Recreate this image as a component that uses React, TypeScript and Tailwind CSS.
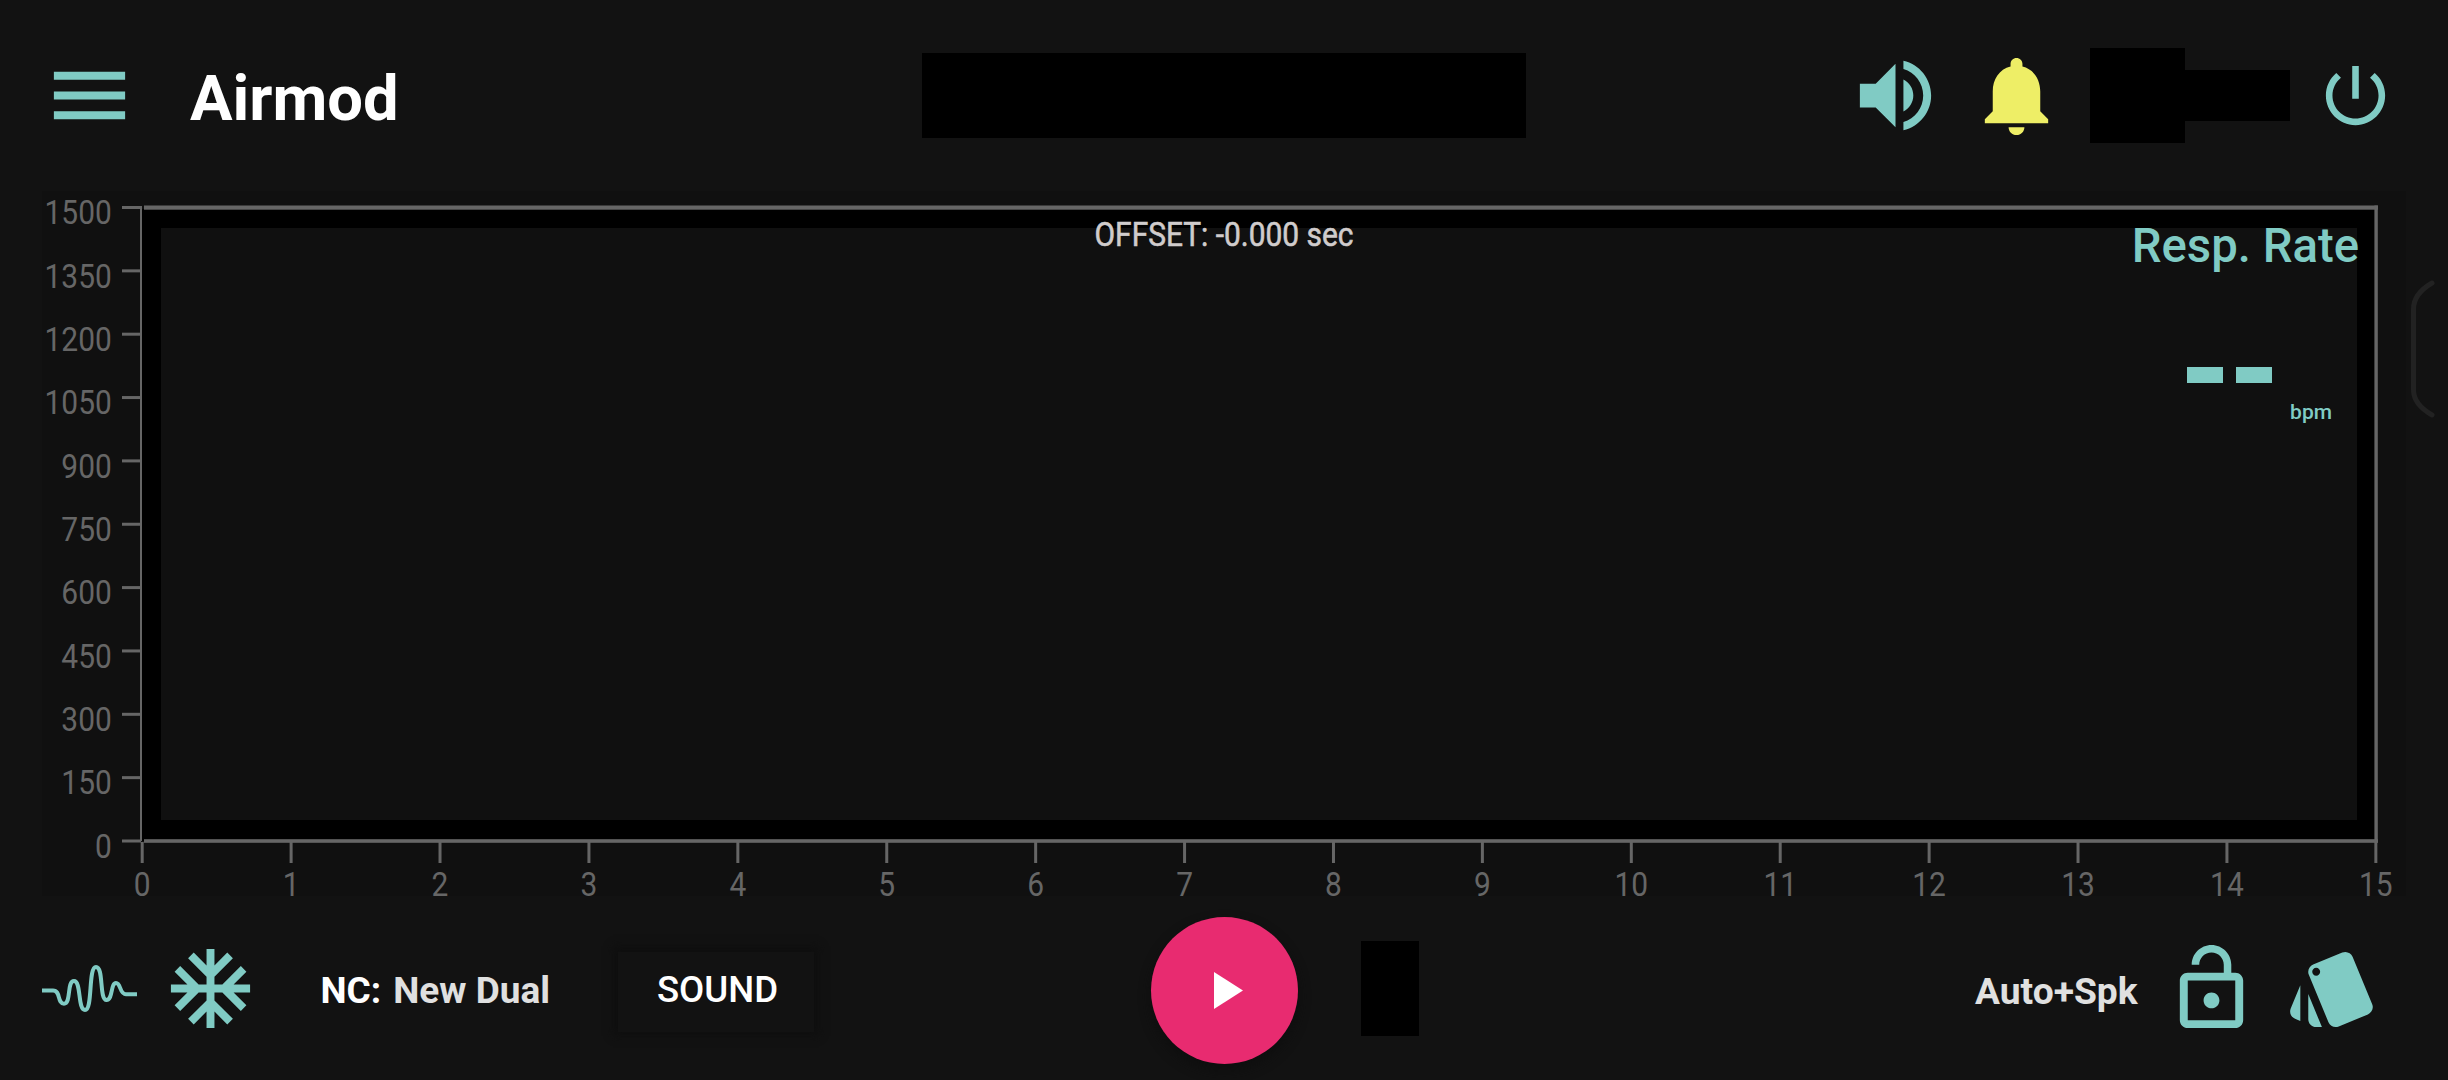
import type { ReactNode } from "react";

const TEAL = "#80cbc4";

const PATHS = {
  menu: "M3 18h18v-2H3v2zm0-5h18v-2H3v2zm0-7v2h18V6H3z",
  volume:
    "M3 9v6h4l5 5V4L7 9H3zm13.5 3c0-1.77-1.02-3.29-2.5-4.03v8.05c1.48-.73 2.5-2.25 2.5-4.02zM14 3.23v2.06c2.89.86 5 3.54 5 6.71s-2.11 5.85-5 6.71v2.06c4.01-.91 7-4.49 7-8.77s-2.99-7.86-7-8.77z",
  bell: "M12 22c1.1 0 2-.9 2-2h-4c0 1.1.89 2 2 2zm6-6v-5c0-3.07-1.64-5.64-4.5-6.32V4c0-.83-.67-1.5-1.5-1.5s-1.5.67-1.5 1.5v.68C7.63 5.36 6 7.92 6 11v5l-2 2v1h16v-1l-2-2z",
  power:
    "M13 3h-2v10h2V3zm4.83 2.17l-1.42 1.42C17.99 7.86 19 9.81 19 12c0 3.87-3.13 7-7 7s-7-3.13-7-7c0-2.19 1.01-4.14 2.58-5.42L6.17 5.17C4.23 6.82 3 9.26 3 12c0 4.97 4.03 9 9 9s9-4.03 9-9c0-2.74-1.23-5.18-3.17-6.83z",
  freeze:
    "M22 11h-4.17l3.24-3.24-1.41-1.42L15 11h-2V9l4.66-4.66-1.42-1.41L13 6.17V2h-2v4.17L7.76 2.93 6.34 4.34 11 9v2H9L4.34 6.34 2.93 7.76 6.17 11H2v2h4.17l-3.24 3.24 1.41 1.42L9 13h2v2l-4.66 4.66 1.42 1.41L11 17.83V22h2v-4.17l3.24 3.24 1.42-1.41L13 15v-2h2l4.66 4.66 1.41-1.42L17.83 13H22v-2z",
  unlock:
    "M12 17c1.1 0 2-.9 2-2s-.9-2-2-2-2 .9-2 2 .9 2 2 2zm6-9h-1V6c0-2.76-2.24-5-5-5S7 3.24 7 6h1.9c0-1.71 1.39-3.1 3.1-3.1 1.71 0 3.1 1.39 3.1 3.1v2H6c-1.1 0-2 .9-2 2v10c0 1.1.9 2 2 2h12c1.1 0 2-.9 2-2V10c0-1.1-.9-2-2-2zm0 12H6V10h12v10z",
  cards:
    "M2.53 19.65l1.34.56v-9.03l-2.43 5.86c-.41 1.02.08 2.19 1.09 2.61zm19.5-3.7L17.07 3.98c-.31-.75-1.04-1.21-1.81-1.23-.26 0-.53.04-.79.15L7.1 5.95c-.75.31-1.21 1.03-1.23 1.8-.01.27.04.54.15.8l4.96 11.97c.31.76 1.05 1.22 1.83 1.23.26 0 .52-.05.77-.15l7.36-3.05c1.02-.42 1.51-1.59 1.09-2.6zM7.88 8.75c-.55 0-1-.45-1-1s.45-1 1-1 1 .45 1 1-.45 1-1 1zm-2 11c0 1.1.9 2 2 2h1.45l-3.45-8.34v6.34z",
};

function Icon({ d, className = "" }: { d: string; className?: string }) {
  return (
    <svg viewBox="0 0 24 24" fill="currentColor" className={`block shrink-0 ${className}`}>
      <path d={d} />
    </svg>
  );
}

function IconButton({ label, className = "", children }: { label: string; className?: string; children: ReactNode }) {
  return (
    <button aria-label={label} className={`block shrink-0 text-[#80cbc4] ${className}`}>
      {children}
    </button>
  );
}

function Header() {
  return (
    <header className="flex h-[191px] items-center pl-[42px]">
      <IconButton label="Menu">
        <Icon d={PATHS.menu} className="size-[95px]" />
      </IconButton>
      <h1 className="ml-[53px] w-[732px] shrink-0 pt-[5px] text-[63.3px] leading-[71px] font-bold text-white">Airmod</h1>
      <div className="h-[85px] w-[604px] shrink-0 bg-black" />
      <IconButton label="Volume" className="ml-[322px]">
        <Icon d={PATHS.volume} className="size-[95px]" />
      </IconButton>
      <IconButton label="Alarms" className="ml-[26px]">
        <Icon d={PATHS.bell} className="size-[95px] text-[#eeee66]" />
      </IconButton>
      <div className="ml-[26px] size-[95px] shrink-0 bg-black" />
      <div className="h-[51px] w-[105px] shrink-0 bg-black" />
      <IconButton label="Power" className="ml-[26px]">
        <Icon d={PATHS.power} className="size-[79px]" />
      </IconButton>
    </header>
  );
}

const X0 = 100.2;
const X_STEP = 148.91;
const Y0 = 650;
const Y_STEP = 63.35;

function Chart() {
  const yTicks = Array.from({ length: 11 }, (_, i) => i);
  const xTicks = Array.from({ length: 16 }, (_, i) => i);
  return (
    <section className="relative ml-[42px] h-[705px] w-[2364px] bg-[#101010]">
      <svg viewBox="0 0 2364 705" className="block h-[705px] w-[2364px] overflow-visible">
        <rect x="100" y="18" width="2233" height="632" fill="#000" />
        <rect x="119" y="37" width="2196" height="592" fill="#101010" />
        <g fill="#666666">
          <rect x="98" y="15" width="2" height="635" />
          <rect x="102" y="14.5" width="2234" height="4.2" />
          <rect x="102" y="648.2" width="2234" height="3.6" />
          <rect x="2332.4" y="14.5" width="3.4" height="637" />
          {yTicks.map((i) => (
            <rect key={i} x="80" y={Y0 - i * Y_STEP - 1.5} width="19" height="3" />
          ))}
          {xTicks.map((i) => (
            <rect key={i} x={X0 + i * X_STEP - 1.5} y="651" width="3" height="21" />
          ))}
        </g>
        <g fill="#666666" fontSize="34">
          {yTicks.map((i) => (
            <text key={i} textAnchor="end" transform={`translate(69.8 ${Y0 - i * Y_STEP + 16.7}) scale(0.88 1)`}>
              {i * 150}
            </text>
          ))}
          {xTicks.map((i) => (
            <text key={i} textAnchor="middle" transform={`translate(${X0 + i * X_STEP} 705) scale(0.88 1)`}>
              {i}
            </text>
          ))}
        </g>
        <text
          textAnchor="middle"
          fontSize="34"
          fill="#d0cccc"
          stroke="#d0cccc"
          strokeWidth="0.6"
          transform="translate(1182 55) scale(0.88 1)"
        >
          OFFSET: -0.000 sec
        </text>
      </svg>
      <div className="absolute top-[28px] right-[47px] flex flex-col items-end text-[#80cbc4]">
        <div className="text-[47.3px] leading-[55px] font-medium whitespace-nowrap">Resp. Rate</div>
        <div className="mt-[93px] mr-[87px] flex gap-[13px]">
          <span className="h-[15.5px] w-[36px] bg-[#80cbc4]" />
          <span className="h-[15.5px] w-[36px] bg-[#80cbc4]" />
        </div>
        <div className="mt-[17.500px] mr-[27px] text-[21px] leading-[25px] font-medium">bpm</div>
      </div>
    </section>
  );
}

function Footer() {
  return (
    <footer className="flex h-[184px] items-center pt-px pl-[42px] text-[37px] leading-[44px]">
      <IconButton label="Waveform">
        <svg viewBox="42 941 95 95" className="block size-[95px]" fill="none" stroke={TEAL} strokeWidth="4">
          <path d="M42 990.500H53C61 990.500 57 1003.700 64 1003.700C71.500 1003.700 66.500 981 74 981C81.500 981 77.500 1010 85 1010C93 1010 88 967 96 967C104 967 99 1000 106.500 1000C113 1000 110.500 983 116 983C121 983 119.500 994.300 126 994.300H137" />
        </svg>
      </IconButton>
      <IconButton label="Freeze" className="ml-[26px]">
        <Icon d={PATHS.freeze} className="size-[95px]" />
      </IconButton>
      <div className="ml-[62.500px] flex w-[297px] shrink-0 gap-[12px] pt-[4px] font-bold whitespace-nowrap text-white">
        <span>NC:</span>
        <span className="text-[#e0e0e0]">New Dual</span>
      </div>
      <button className="mt-[7px] h-[80px] w-[196px] shrink-0 bg-[#121212] pb-[5px] pl-[4px] text-[36.600px] font-medium text-white shadow-[0_-1px_8px_5px_#0f0f0f]">
        SOUND
      </button>
      <button
        aria-label="Start"
        className="mt-[4px] ml-[337.500px] flex size-[147px] shrink-0 items-center justify-center rounded-full bg-[#e82b70] shadow-[0_6px_12px_#0e0e0e]"
      >
        <svg viewBox="0 0 29 37" className="ml-[8px] h-[37px] w-[29px]" fill="#fff">
          <path d="M0 0L29 18.500L0 37Z" />
        </svg>
      </button>
      <div className="ml-[63px] h-[95px] w-[58px] shrink-0 bg-black" />
      <div className="ml-[556px] w-[189px] shrink-0 pt-1 text-[37.200px] font-bold text-[#e0e0e0]">Auto+Spk</div>
      <IconButton label="Screen lock">
        <Icon d={PATHS.unlock} className="size-[95px]" />
      </IconButton>
      <IconButton label="Themes" className="ml-[26px]">
        <Icon d={PATHS.cards} className="size-[95px]" />
      </IconButton>
    </footer>
  );
}

function EdgeHandle() {
  return (
    <svg
      viewBox="2408 278 30 142"
      className="absolute top-[278px] left-[2408px] h-[142px] w-[30px]"
      fill="none"
      stroke="#222222"
      strokeWidth="5"
      strokeLinecap="round"
    >
      <path d="M2432 283C2420 290 2413.500 298 2413.500 309V390C2413.500 400 2420 408 2432 415" />
    </svg>
  );
}

export default function App() {
  return (
    <main className="relative h-[1080px] w-[2448px] overflow-hidden bg-[#121212] font-[Roboto,sans-serif]">
      <Header />
      <Chart />
      <Footer />
      <EdgeHandle />
    </main>
  );
}
